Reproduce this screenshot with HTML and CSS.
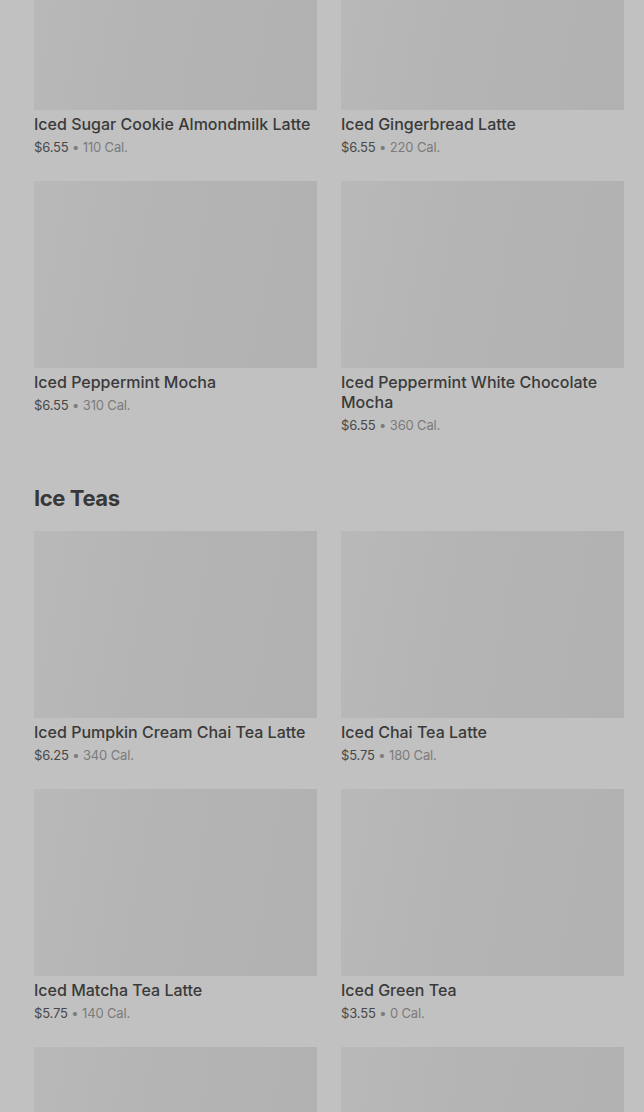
FILE: index.html
```html
<!DOCTYPE html>
<html lang="en">
<head>
    <meta charset="UTF-8">
    <title>Menu</title>
    <link rel="stylesheet" href="styles.css">
</head>
<body>
    <div class="page">
        <section class="section first">
            <div class="grid">
                <div class="item">
                    <div class="pic"></div>
                    <div class="name">Iced Sugar Cookie Almondmilk Latte</div>
                    <div class="meta"><span class="price">$6.55</span> • 110 Cal.</div>
                </div>
                <div class="item">
                    <div class="pic"></div>
                    <div class="name">Iced Gingerbread Latte</div>
                    <div class="meta"><span class="price">$6.55</span> • 220 Cal.</div>
                </div>
                <div class="item">
                    <div class="pic"></div>
                    <div class="name">Iced Peppermint Mocha</div>
                    <div class="meta"><span class="price">$6.55</span> • 310 Cal.</div>
                </div>
                <div class="item">
                    <div class="pic"></div>
                    <div class="name">Iced Peppermint White Chocolate Mocha</div>
                    <div class="meta"><span class="price">$6.55</span> • 360 Cal.</div>
                </div>
            </div>
        </section>

        <section class="section">
            <h2>Ice Teas</h2>
            <div class="grid">
                <div class="item">
                    <div class="pic"></div>
                    <div class="name">Iced Pumpkin Cream Chai Tea Latte</div>
                    <div class="meta"><span class="price">$6.25</span> • 340 Cal.</div>
                </div>
                <div class="item">
                    <div class="pic"></div>
                    <div class="name">Iced Chai Tea Latte</div>
                    <div class="meta"><span class="price">$5.75</span> • 180 Cal.</div>
                </div>
                <div class="item">
                    <div class="pic"></div>
                    <div class="name">Iced Matcha Tea Latte</div>
                    <div class="meta"><span class="price">$5.75</span> • 140 Cal.</div>
                </div>
                <div class="item">
                    <div class="pic"></div>
                    <div class="name">Iced Green Tea</div>
                    <div class="meta"><span class="price">$3.55</span> • 0 Cal.</div>
                </div>
                <div class="item">
                    <div class="pic"></div>
                </div>
                <div class="item">
                    <div class="pic"></div>
                </div>
            </div>
        </section>
    </div>
</body>
</html>
```

FILE: styles.css
```css
html, body { margin: 0; height: 100%; overflow: hidden; }
body { background: #c1c1c1; font-family: Inter, "Liberation Sans", Arial, sans-serif; color: #3a3a3a; }
.page { padding: 0 20px 0 34px; }
.section.first { margin-top: -77px; }
.section + .section { margin-top: 48px; }
h2 { margin: 0 0 17px; font-size: 22px; line-height: 32px; font-weight: 700; color: #383838; letter-spacing: -0.4px; }
.grid { display: grid; grid-template-columns: 283px 283px; column-gap: 24px; row-gap: 25px; }
.pic { height: 187px; background: linear-gradient(100deg, #b9b9b9 0%, #b4b4b4 40%, #b1b1b1 100%); }
.name { margin-top: 4px; font-size: 16px; line-height: 20px; font-weight: 500; color: #3a3a3a; }
.meta { margin-top: 4px; font-size: 13px; line-height: 18px; color: #7b7b7b; letter-spacing: -0.15px; }
.price { color: #484848; }
```
